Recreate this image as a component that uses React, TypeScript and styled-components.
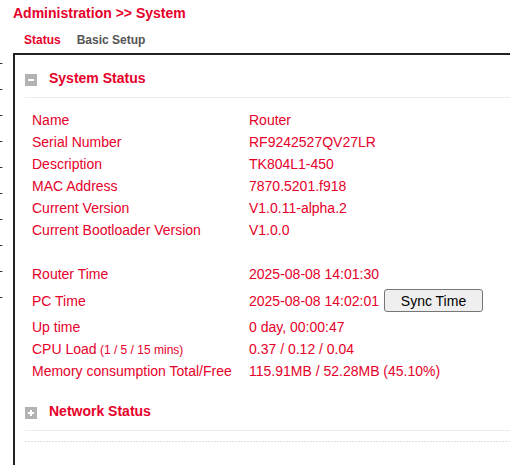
import styled, { createGlobalStyle } from "styled-components";

const RED = "#e6002a";

const GlobalStyle = createGlobalStyle`
	html, body {
		margin: 0;
		padding: 0;
		background: #ffffff;
	}
	body {
		font-family: "Liberation Sans", Arial, sans-serif;
		width: 510px;
		overflow: hidden;
	}
`;

const rows: { label: string; note?: string; value: string; sync?: boolean }[] = [
	{ label: "Name", value: "Router" },
	{ label: "Serial Number", value: "RF9242527QV27LR" },
	{ label: "Description", value: "TK804L1-450" },
	{ label: "MAC Address", value: "7870.5201.f918" },
	{ label: "Current Version", value: "V1.0.11-alpha.2" },
	{ label: "Current Bootloader Version", value: "V1.0.0" },
	{ label: "", value: "" },
	{ label: "Router Time", value: "2025-08-08 14:01:30" },
	{ label: "PC Time", value: "2025-08-08 14:02:01", sync: true },
	{ label: "Up time", value: "0 day, 00:00:47" },
	{ label: "CPU Load", note: "(1 / 5 / 15 mins)", value: "0.37 / 0.12 / 0.04" },
	{ label: "Memory consumption Total/Free", value: "115.91MB / 52.28MB (45.10%)" },
];

const App = () => {
	return (
		<>
			<GlobalStyle />
			<Page>
				<Gutter>
					{Array.from({ length: 10 }).map((_, i) => (
						<Tick key={i} />
					))}
				</Gutter>
				<Main>
					<Title>Administration &gt;&gt; System</Title>
					<Tabs>
						<Tab $active>Status</Tab>
						<Tab>Basic Setup</Tab>
					</Tabs>
					<Panel>
						<SectionHeader>
							<ToggleIcon $open />
							<SectionTitle>System Status</SectionTitle>
						</SectionHeader>
						<InfoTable>
							{rows.map((r, i) => (
								<Row key={i} $tall={r.sync}>
									<Label>
										{r.label}
										{r.note && <Note> {r.note}</Note>}
									</Label>
									<Value>
										{r.value}
										{r.sync && <SyncButton>Sync Time</SyncButton>}
									</Value>
								</Row>
							))}
						</InfoTable>
						<SectionHeader $spaced>
							<ToggleIcon />
							<SectionTitle>Network Status</SectionTitle>
						</SectionHeader>
						<DottedRule />
					</Panel>
				</Main>
			</Page>
		</>
	);
};

export default App;

const Page = styled.div`
	display: flex;
	width: 510px;
	height: 465px;
	overflow: hidden;
`;

const Gutter = styled.div`
	width: 13px;
	flex: none;
	padding-top: 63px;
	display: flex;
	flex-direction: column;
`;

const Tick = styled.div`
	height: 26px;

	&::before {
		content: "";
		display: block;
		width: 2px;
		height: 1px;
		background: #333;
		box-shadow: 1px 0 0 #aaa;
	}
`;

const Main = styled.div`
	flex: 1;
	min-width: 0;
	display: flex;
	flex-direction: column;
`;

const Title = styled.div`
	padding-top: 4px;
	font-size: 14px;
	line-height: 18px;
	font-weight: bold;
	color: ${RED};
`;

const Tabs = styled.div`
	display: flex;
	gap: 16px;
	margin-top: 9px;
	padding-left: 11px;
`;

const Tab = styled.span<{ $active?: boolean }>`
	font-size: 12px;
	line-height: 18px;
	font-weight: bold;
	color: ${(p) => (p.$active ? RED : "#555555")};
`;

const Panel = styled.div`
	margin-top: 4px;
	border-top: 2px solid #222;
	border-left: 2px solid #222;
	padding-left: 10px;
	flex: 1;
`;

const SectionHeader = styled.div<{ $spaced?: boolean }>`
	display: flex;
	align-items: flex-start;
	gap: 12px;
	padding-top: ${(p) => (p.$spaced ? "20px" : "14px")};
	padding-bottom: 10px;
	border-bottom: 1px solid #ececec;
`;

const ToggleIcon = styled.span<{ $open?: boolean }>`
	position: relative;
	flex: none;
	width: 12px;
	height: 12px;
	margin-top: 5px;
	background: #b3b3b3;

	&::before {
		content: "";
		position: absolute;
		left: 3px;
		top: 5px;
		width: 6px;
		height: 2px;
		background: #fff;
	}

	&::after {
		content: "";
		display: ${(p) => (p.$open ? "none" : "block")};
		position: absolute;
		left: 5px;
		top: 3px;
		width: 2px;
		height: 6px;
		background: #fff;
	}
`;

const SectionTitle = styled.span`
	font-size: 14px;
	line-height: 18px;
	font-weight: bold;
	color: ${RED};
`;

const InfoTable = styled.div`
	margin-top: 11px;
	padding-left: 7px;
	display: flex;
	flex-direction: column;
`;

const Row = styled.div<{ $tall?: boolean }>`
	display: flex;
	align-items: center;
	height: ${(p) => (p.$tall ? "31px" : "22px")};
	font-size: 14px;
	color: ${RED};
`;

const Label = styled.div`
	width: 217px;
	flex: none;
	white-space: nowrap;
`;

const Note = styled.span`
	font-size: 12px;
`;

const Value = styled.div`
	display: flex;
	align-items: center;
	white-space: nowrap;
`;

const SyncButton = styled.button`
	margin-left: 5px;
	width: 99px;
	height: 23px;
	padding: 0;
	border: 1px solid #767676;
	border-radius: 3px;
	background: #efefef;
	color: #000;
	font-family: "Liberation Sans", Arial, sans-serif;
	font-size: 14px;
`;

const DottedRule = styled.div`
	margin-top: 10px;
	height: 1px;
	background: repeating-linear-gradient(to right, #e0e0e0 0 2px, transparent 2px 3px);
`;
